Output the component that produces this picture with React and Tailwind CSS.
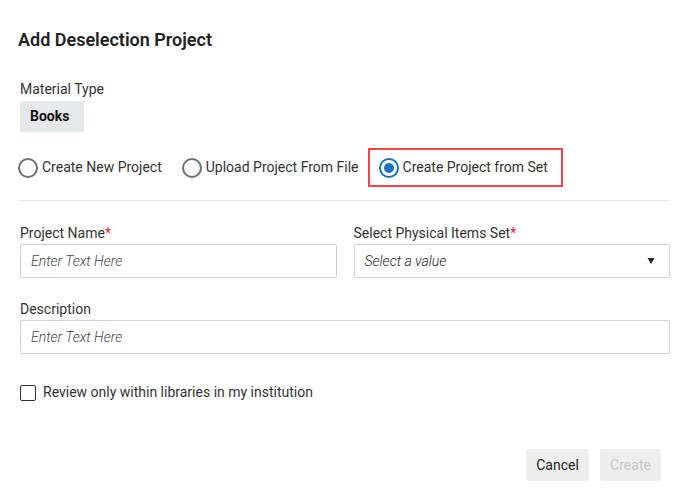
import React from 'react';

function Radio({ checked, label }) {
  return (
    <label className="flex items-center gap-1 cursor-pointer">
      {checked ? (
        <span className="w-5 h-5 rounded-full border-2 border-[#1a73b8] flex items-center justify-center">
          <span className="w-[10px] h-[10px] rounded-full bg-[#1a73b8]" />
        </span>
      ) : (
        <span className="w-5 h-5 rounded-full border-2 border-[#6f6f6f]" />
      )}
      <span className="text-[14px] text-[#333]">{label}</span>
    </label>
  );
}

function App() {
  return (
    <div className="w-[688px] h-[493px] bg-white font-['Roboto',sans-serif] text-[#333] relative">
      {/* Header */}
      <div className="pl-[18px] pt-[29px] h-[52px]">
        <h1 className="text-[18px] font-semibold leading-[22px] text-[#222]">Add Deselection Project</h1>
      </div>

      <div className="pl-5 pr-[18px]">
        {/* Material type */}
        <div className="mt-[28px] text-[14px] leading-[18px]">Material Type</div>
        <div className="mt-[3px] inline-flex items-center h-[31px] px-[10px] w-[64px] bg-[#e6e9ea] rounded-[2px] text-[14px] font-bold text-[#111]">
          Books
        </div>

        {/* Project type radios */}
        <div className="mt-[16px] flex items-center h-[39px] -ml-[2px]">
          <Radio label="Create New Project" />
          <div className="ml-5">
            <Radio label="Upload Project From File" />
          </div>
          <div className="ml-[9px] h-[39px] border-2 border-[#f4434a] flex items-center pl-[9px] pr-[13px]">
            <Radio checked label="Create Project from Set" />
          </div>
        </div>
      </div>

      <div className="mx-[18px] mt-[13px] border-t border-[#e6e6e6]" />

      <div className="pl-5 pr-[18px]">
        {/* Name / set */}
        <div className="mt-[23px] grid grid-cols-2 gap-x-[17px]">
          <div>
            <div className="text-[14px] leading-[18px]">
              Project Name<span className="text-[#e8202a]">*</span>
            </div>
            <div className="mt-[2px] h-[34px] border border-[#cfcfcf] rounded-[2px] flex items-center px-[10px]">
              <span className="italic font-light text-[14px] text-[#444]">Enter Text Here</span>
            </div>
          </div>
          <div>
            <div className="text-[14px] leading-[18px]">
              Select Physical Items Set<span className="text-[#e8202a]">*</span>
            </div>
            <div className="mt-[2px] h-[34px] border border-[#cfcfcf] rounded-[2px] flex items-center justify-between pl-[10px] pr-[14px]">
              <span className="italic font-light text-[14px] text-[#222]">Select a value</span>
              <svg width="8" height="6" viewBox="0 0 8 6">
                <path d="M0.5 0 L7.5 0 L4 6 Z" fill="#222" />
              </svg>
            </div>
          </div>
        </div>

        {/* Description */}
        <div className="mt-[22px] text-[14px] leading-[18px]">Description</div>
        <div className="mt-[2px] h-[34px] border border-[#cfcfcf] rounded-[2px] flex items-center px-[10px]">
          <span className="italic font-light text-[14px] text-[#444]">Enter Text Here</span>
        </div>

        {/* Checkbox */}
        <label className="mt-[28px] flex items-center gap-[7px]">
          <span className="w-4 h-4 border-[1.5px] border-[#333] rounded-[2px]" />
          <span className="text-[14px]">Review only within libraries in my institution</span>
        </label>
      </div>

      {/* Footer buttons */}
      <div className="absolute left-0 right-0 top-[449px] flex justify-end gap-[11px] pr-[27px]">
        <button className="h-8 w-[63px] bg-[#eeeeee] rounded-[3px] text-[14px] text-[#222]">Cancel</button>
        <button className="h-8 w-[61px] bg-[#eeeeee] rounded-[3px] text-[14px] text-[#c8c8c8]">Create</button>
      </div>
    </div>
  );
}

export default App;
